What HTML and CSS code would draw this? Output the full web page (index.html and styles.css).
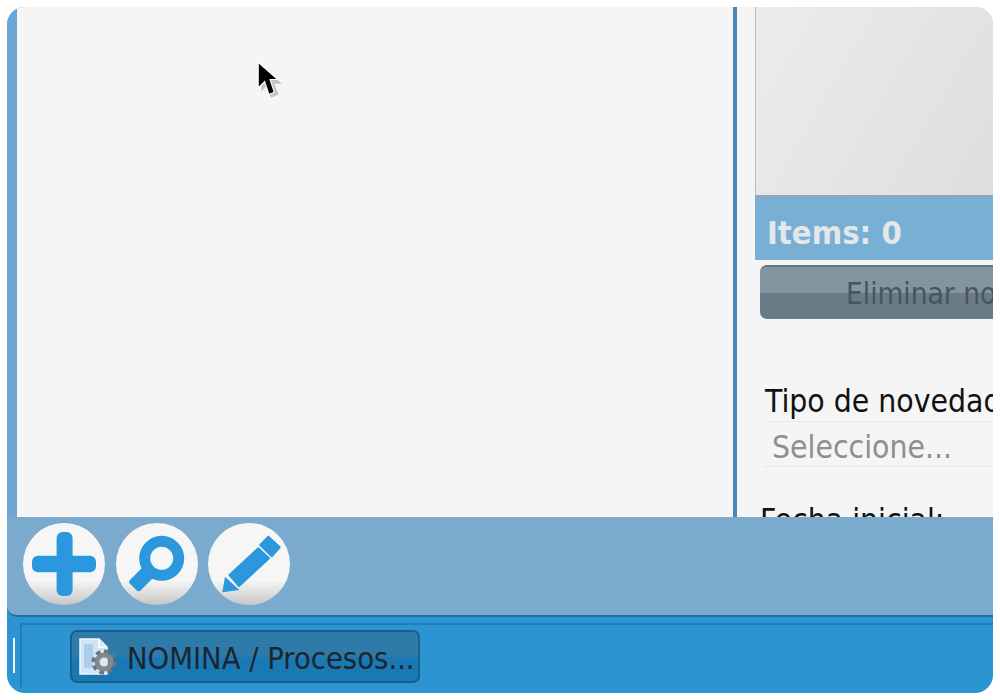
FILE: index.html
```html
<!DOCTYPE html>
<html lang="en">

<head>
    <meta charset="UTF-8">
    <title>Novedades</title>
    <link rel="stylesheet" href="styles.css">
</head>

<body>

    <div class="window">
        <div class="main">
            <div class="strip"></div>
            <div class="canvas"></div>
            <div class="divider"></div>

            <div class="side">
                <div class="preview"></div>
                <div class="items-bar">Items: 0</div>
                <div class="delete-btn">Eliminar novedad</div>
                <div class="field-label">Tipo de novedad</div>
                <div class="field-select">Seleccione...</div>
                <div class="field-label date-label">Fecha inicial:</div>
            </div>
        </div>

        <!-- Toolbar -->
        <div class="toolbar">
            <div class="round-btn">
                <svg viewBox="0 0 82 82" width="82" height="82">
                    <rect x="33.6" y="9" width="16" height="64" rx="6" class="blue" />
                    <rect x="9" y="32.8" width="64" height="16.5" rx="6" class="blue" />
                </svg>
            </div>
            <div class="round-btn btn-gap">
                <svg viewBox="0 0 82 82" width="82" height="82">
                    <circle cx="45.7" cy="35.3" r="17" fill="none" stroke="#2b97dc" stroke-width="11" />
                    <rect x="14" y="48.5" width="23" height="15" rx="3" class="blue" transform="rotate(-45 25.5 56)" />
                </svg>
            </div>
            <div class="round-btn btn-gap-wide">
                <svg viewBox="0 0 82 82" width="82" height="82">
                    <polygon points="60.3,13.7 71.7,24.3 63.7,33.3 52.3,22" class="pen" />
                    <polygon points="50.3,25.3 61,35.3 31,63 21.5,52" class="pen" />
                    <polygon points="17,53.7 31.3,67 14.3,69.3" class="blue" />
                </svg>
            </div>
        </div>

        <!-- Task bar -->
        <div class="taskbar">
            <div class="tick"></div>
            <div class="tray">
                <div class="tab">
                    <svg class="tab-icon" viewBox="0 0 40 40" width="40" height="40">
                        <path d="M1 2 H20 L28 10 V37 H1 Z" fill="#cfe4f5" stroke="#eef6fc" stroke-width="1.5" />
                        <path d="M20 2 V10 H28" fill="none" stroke="#f4f9fd" stroke-width="2" />
                        <rect x="5" y="7" width="9" height="24" fill="#a9cdea" />
                        <circle cx="25" cy="25" r="10" fill="none" stroke="#6f7478" stroke-width="5" stroke-dasharray="4.4 3.4" />
                        <circle cx="25" cy="25" r="7" fill="none" stroke="#83888c" stroke-width="5" />
                        <circle cx="25" cy="25" r="3.5" fill="#e4e8ea" />
                    </svg>
                    <span class="tab-text">NOMINA / Procesos...</span>
                </div>
            </div>
        </div>

        <!-- Mouse pointer -->
        <svg class="cursor" viewBox="0 0 28 40" width="30" height="43">
            <path d="M6 6 L6 30 L11 25 L15 36 L22 33 L18 23 L25 23 Z" fill="#999" opacity="0.55" />
            <path d="M3 3 L3 27 L9 21 L13 33 L18 31 L14 19 L21 19 Z" fill="#000" stroke="#fff" stroke-width="1" />
        </svg>
    </div>

</body>

</html>
```

FILE: styles.css
```css
body {
    font-family: 'DejaVu Sans Condensed', 'DejaVu Sans', sans-serif;
    margin: 0;
    background: #fff;
}

.window {
    position: relative;
    display: flex;
    flex-direction: column;
    width: 986px;
    height: 686px;
    margin: 7px;
    border-radius: 18px;
    overflow: hidden;
    background: #2b94d1;
}

.main {
    display: flex;
    height: 510px;
    flex: none;
}

.strip {
    width: 10px;
    background: #6ba6d4;
}

.canvas {
    width: 716px;
    background: #f5f5f5;
}

.divider {
    width: 4px;
    background: #4a86b5;
}

.side {
    flex: 1;
    min-width: 0;
    padding-left: 18px;
    background: #f5f5f5;
    overflow: hidden;
    white-space: nowrap;
}

.preview {
    height: 188px;
    background: linear-gradient(120deg, #ececec, #dedede);
    border-left: 1px solid #b4bcc4;
    border-bottom: 2px solid #92a6b6;
}

.items-bar {
    height: 47px;
    padding: 16px 0 0 12px;
    background: #78afd5;
    color: #e4e6e8;
    font-size: 32.5px;
    font-weight: bold;
    line-height: 40px;
}

.delete-btn {
    box-sizing: border-box;
    width: 320px;
    height: 54px;
    margin: 5px 0 0 5px;
    padding-left: 86px;
    border-radius: 7px;
    border-top: 2px solid #66777f;
    background: linear-gradient(#84959f 50%, #6a7b88 50%);
    color: #47555f;
    font-size: 29.5px;
    line-height: 54px;
}

.field-label {
    margin: 62px 0 0 10px;
    color: #111;
    font-size: 31.6px;
    line-height: 40px;
}

.field-select {
    height: 44px;
    margin-left: 10px;
    padding-left: 7px;
    border-top: 1px solid #e6e8ea;
    border-bottom: 1px dotted #d8d8d8;
    color: #8f8f8f;
    font-size: 31.6px;
    line-height: 50px;
}

.date-label {
    margin: 33px 0 0 5px;
}

.toolbar {
    display: flex;
    flex: none;
    box-sizing: border-box;
    height: 100px;
    padding: 6px 0 0 16px;
    background: #7aabce;
    border-bottom: 2px solid #1f6f9f;
    border-bottom-left-radius: 10px;
}

.round-btn {
    width: 82px;
    height: 82px;
    border-radius: 50%;
    background: linear-gradient(#f6f6f6 70%, #c6c6c6);
}

.btn-gap {
    margin-left: 11px;
}

.btn-gap-wide {
    margin-left: 10px;
}

.blue {
    fill: #2b97dc;
}

.pen {
    fill: #2b97dc;
    stroke: #2b97dc;
    stroke-width: 2;
    stroke-linejoin: round;
}

.taskbar {
    display: flex;
    flex: 1;
    min-height: 0;
}

.tick {
    flex: none;
    width: 2px;
    height: 35px;
    margin: 21px 0 0 6px;
    background: #f2f6f9;
}

.tray {
    flex: 1;
    margin: 6px 0 6px 5px;
    padding: 5px 0 0 48px;
    border-top: 2px solid #1f7db5;
    border-left: 2px solid #1f7db5;
}

.tab {
    display: flex;
    align-items: center;
    box-sizing: border-box;
    width: 350px;
    height: 53px;
    padding-left: 7px;
    border: 2px solid #17608e;
    border-radius: 7px;
    background: linear-gradient(#2e7aa8 50%, #1a78b2 50%);
}

.tab-icon {
    flex: none;
}

.tab-text {
    margin: 4px 0 0 8px;
    color: #1a2630;
    font-size: 30.6px;
    white-space: nowrap;
}

.cursor {
    position: absolute;
    left: 248px;
    top: 52px;
}
```
